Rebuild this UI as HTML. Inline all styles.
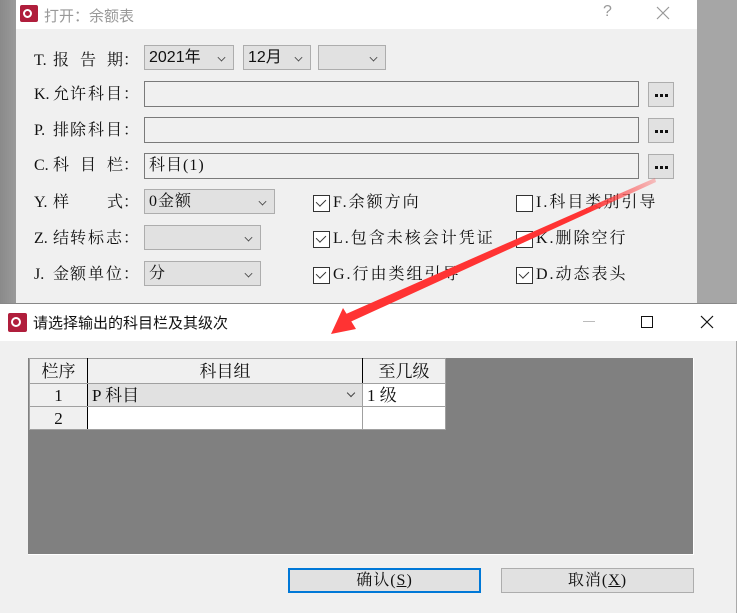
<!DOCTYPE html>
<html><head><meta charset="utf-8"><style>
*{box-sizing:border-box;margin:0;padding:0}
body{width:737px;height:613px;position:relative;overflow:hidden;background:#a6a6a6;font-family:"Liberation Serif","Noto Serif CJK SC",serif;font-size:16px;color:#111}
.a{position:absolute}
.sans{font-family:"Liberation Sans","Noto Sans CJK SC",sans-serif}
.lbl{position:absolute;left:34px;width:110px;height:20px;line-height:20px}
.lbl span{position:absolute;top:0}
.cb{position:absolute;background:#e1e1e1;border:1px solid #adadad;height:25px;line-height:23px;padding-left:4px}
.cb .v{position:absolute;right:8px;top:8px;width:7px;height:7px;border-right:1px solid #444;border-bottom:1px solid #444;transform:rotate(45deg) scale(.8)}
.tf{position:absolute;left:144px;width:495px;height:26px;border:1px solid #7a7a7a;background:#f0f0f0;line-height:24px;padding-left:4px}
.btn3{position:absolute;left:648px;width:26px;height:25px;border:1px solid #adadad;background:#e1e1e1}
.btn3:before{content:"";position:absolute;left:6px;top:11px;width:3px;height:3px;background:#111;box-shadow:5px 0 #111,10px 0 #111}
.ck{position:absolute;white-space:pre;line-height:20px;padding-left:20px;letter-spacing:2px}
.ck:before{content:"";position:absolute;left:0;top:2px;width:15px;height:15px;border:1px solid #333;background:#fff}
.ck.on:after{content:"";position:absolute;left:5px;top:4px;width:5px;height:8px;border-right:1.5px solid #333;border-bottom:1.5px solid #333;transform:rotate(45deg)}
table{table-layout:fixed}
td{border:1px solid #a0a0a0;height:23px;line-height:21px;padding:0;overflow:hidden}
</style></head><body>
<div class="a" style="left:0;top:0;width:16px;height:303px;background:linear-gradient(90deg,#8a8a8a,#9a9a9a)"></div>
<div class="a" style="left:16px;top:0;width:681px;height:303px;background:#f0f0f0">
 <div class="a" style="left:0;top:0;width:681px;height:29px;background:#fff"></div>
 <div class="a" style="left:4px;top:5px;width:18px;height:17px;background:#b01e3c;border-radius:2px"><div class="a" style="left:3px;top:4px;width:9px;height:9px;border:2px solid #fff;border-radius:50%"></div></div>
 <div class="a sans" style="left:28px;top:5px;font-size:15px;color:#999">打开：余额表</div>
 <div class="a sans" style="left:587px;top:3px;font-size:16px;color:#999">?</div>
 <svg class="a" style="left:640px;top:6px" width="14" height="14"><path d="M1 1L13 13M13 1L1 13" stroke="#999" stroke-width="1.2"/></svg>
</div>
<div class="lbl" style="top:51px"><span style="left:0">T.</span><span style="left:19px">报</span><span style="left:46px">告</span><span style="left:73px">期</span><span style="left:89px">：</span></div>
<div class="lbl" style="top:85px"><span style="left:0">K.</span><span style="left:19px">允</span><span style="left:36px">许</span><span style="left:54px">科</span><span style="left:72px">目</span><span style="left:89px">：</span></div>
<div class="lbl" style="top:121px"><span style="left:0">P.</span><span style="left:19px">排</span><span style="left:36px">除</span><span style="left:54px">科</span><span style="left:72px">目</span><span style="left:89px">：</span></div>
<div class="lbl" style="top:156px"><span style="left:0">C.</span><span style="left:19px">科</span><span style="left:46px">目</span><span style="left:73px">栏</span><span style="left:89px">：</span></div>
<div class="lbl" style="top:193px"><span style="left:0">Y.</span><span style="left:19px">样</span><span style="left:73px">式</span><span style="left:89px">：</span></div>
<div class="lbl" style="top:229px"><span style="left:0">Z.</span><span style="left:19px">结</span><span style="left:36px">转</span><span style="left:54px">标</span><span style="left:72px">志</span><span style="left:89px">：</span></div>
<div class="lbl" style="top:265px"><span style="left:0">J.</span><span style="left:19px">金</span><span style="left:36px">额</span><span style="left:54px">单</span><span style="left:72px">位</span><span style="left:89px">：</span></div>
<div class="cb sans" style="left:144px;top:45px;width:90px">2021年<span class="v"></span></div>
<div class="cb sans" style="left:243px;top:45px;width:68px">12月<span class="v"></span></div>
<div class="cb" style="left:318px;top:45px;width:68px"><span class="v"></span></div>
<div class="tf" style="top:81px"></div><div class="btn3" style="top:82px"></div>
<div class="tf" style="top:117px"></div><div class="btn3" style="top:118px"></div>
<div class="tf" style="top:153px;letter-spacing:1px">科目(1)</div><div class="btn3" style="top:154px"></div>
<div class="cb" style="left:144px;top:189px;width:131px;letter-spacing:1px">0金额<span class="v"></span></div>
<div class="cb" style="left:144px;top:225px;width:117px"><span class="v"></span></div>
<div class="cb" style="left:144px;top:261px;width:117px">分<span class="v"></span></div>
<div class="ck on" style="left:313px;top:193px">F.余额方向</div>
<div class="ck on" style="left:313px;top:229px">L.包含未核会计凭证</div>
<div class="ck on" style="left:313px;top:265px">G.行由类组引导</div>
<div class="ck" style="left:516px;top:193px">I.科目类别引导</div>
<div class="ck on" style="left:516px;top:229px">K.删除空行</div>
<div class="ck on" style="left:516px;top:265px">D.动态表头</div>
<div class="a" style="left:0;top:303px;width:737px;height:310px;background:#f0f0f0;border-top:1px solid #888;border-right:1px solid #aaa">
 <div class="a" style="left:0;top:0;width:737px;height:37px;background:#fff"></div>
 <div class="a" style="left:8px;top:9px;width:19px;height:19px;background:#b01e3c;border-radius:2px"><div class="a" style="left:3px;top:4px;width:10px;height:10px;border:2px solid #fff;border-radius:50%"></div></div>
 <div class="a sans" style="left:33px;top:8px;font-size:15px;color:#111">请选择输出的科目栏及其级次</div>
 <div class="a" style="left:583px;top:17px;width:12px;height:1px;background:#bbb"></div>
 <div class="a" style="left:641px;top:12px;width:12px;height:12px;border:1px solid #111"></div>
 <svg class="a" style="left:700px;top:11px" width="14" height="14"><path d="M1 1L13 13M13 1L1 13" stroke="#111" stroke-width="1.2"/></svg>
 <div class="a" style="left:28px;top:54px;width:666px;height:197px;background:#808080;border-right:1px solid #fff;border-bottom:1px solid #fff"></div>
</div>
<table class="a" style="left:29px;top:358px;width:416px;border-collapse:collapse;background:#fff;border:1px solid #000;font-size:17px">
<colgroup><col style="width:58px"><col style="width:275px"><col style="width:83px"></colgroup>
<tr style="background:#f0f0f0;text-align:center"><td style="border-right:1px solid #000;height:25px">栏序</td><td style="border-right:1px solid #000">科目组</td><td>至几级</td></tr>
<tr><td style="background:#f0f0f0;text-align:center;border-right:1px solid #000">1</td><td style="background:#e1e1e1;padding-left:4px;position:relative">P 科目<span style="position:absolute;right:8px;top:6px;width:6px;height:6px;border-right:1px solid #444;border-bottom:1px solid #444;transform:rotate(45deg)"></span></td><td style="padding-left:4px">1 级</td></tr>
<tr><td style="background:#f0f0f0;text-align:center;border-right:1px solid #000">2</td><td></td><td></td></tr>
</table>
<div class="a" style="left:288px;top:568px;width:193px;height:25px;border:2px solid #0078d7;background:#e1e1e1;text-align:center;line-height:21px;letter-spacing:1px">确认(<u>S</u>)</div>
<div class="a" style="left:501px;top:568px;width:193px;height:25px;border:1px solid #adadad;background:#e1e1e1;text-align:center;line-height:23px;letter-spacing:1px">取消(<u>X</u>)</div>
<svg class="a" style="left:0;top:0" width="737" height="613"><defs><linearGradient id="g" x1="655" y1="180" x2="333" y2="333" gradientUnits="userSpaceOnUse"><stop offset="0" stop-color="#f44" stop-opacity=".3"/><stop offset=".2" stop-color="#f33"/><stop offset="1" stop-color="#f33"/></linearGradient></defs>
<polygon points="655,178 656,182 350,322 346,314" fill="url(#g)"/>
<polygon points="331,334 343,308 356,329" fill="#f33"/></svg>
</body></html>
